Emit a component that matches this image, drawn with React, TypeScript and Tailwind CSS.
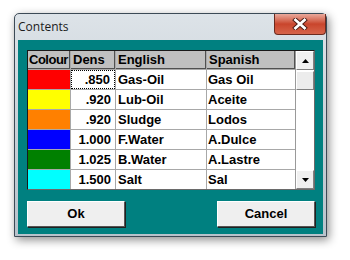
import React from "react";

const rows = [
  { colour: "bg-[#ff0000]", dens: ".850", en: "Gas-Oil", es: "Gas Oil" },
  { colour: "bg-[#ffff00]", dens: ".920", en: "Lub-Oil", es: "Aceite" },
  { colour: "bg-[#ff8000]", dens: ".920", en: "Sludge", es: "Lodos" },
  { colour: "bg-[#0000ff]", dens: "1.000", en: "F.Water", es: "A.Dulce" },
  { colour: "bg-[#008000]", dens: "1.025", en: "B.Water", es: "A.Lastre" },
  { colour: "bg-[#00ffff]", dens: "1.500", en: "Salt", es: "Sal" },
];

const headers = ["Colour", "Dens", "English", "Spanish"];

const ScrollButton = ({ up }: { up?: boolean }) => (
  <div className="flex h-[19px] items-center justify-center border border-t-white border-l-white border-b-[#808080] border-r-[#808080] bg-[#f0f0f0]">
    <svg width="7" height="4" viewBox="0 0 7 4">
      {up ? <path d="M3.5 0 L7 4 L0 4 Z" fill="#000" /> : <path d="M0 0 L7 0 L3.5 4 Z" fill="#000" />}
    </svg>
  </div>
);

export default function App() {
  return (
    <div className="h-[260px] w-[350px] bg-white pl-[14px] pt-[13px] font-['Liberation_Sans',Arial,sans-serif]">
      <div className="relative flex h-[224px] w-[313px] flex-col rounded-t-[5px] border border-[#3c4a56] bg-gradient-to-b from-[#dde3e8] via-[#c9d1d8] to-[#b8c2cb] shadow-[2px_3px_10px_rgba(0,0,0,0.45)]">
        {/* title bar */}
        <div className="flex h-[26px] items-center pl-[3px] font-['Open_Sans',sans-serif] text-[12px] text-[#1b1b1b]">
          Contents
        </div>
        <div className="absolute right-0 top-0 flex h-[21px] w-[52px] items-center justify-center rounded-b-[4px] border border-t-0 border-[#6b2a1e] bg-gradient-to-b from-[#e9a99c] via-[#c9452c] to-[#d6644a]">
          <svg width="16" height="12" viewBox="0 0 16 12">
            <path d="M3.5 2 L12.5 10 M12.5 2 L3.5 10" stroke="#4a1a12" strokeWidth="4.6" strokeLinecap="square" />
            <path d="M3.5 2 L12.5 10 M12.5 2 L3.5 10" stroke="#fff" strokeWidth="2.8" strokeLinecap="square" />
          </svg>
        </div>

        {/* client area */}
        <div className="mx-[3px] flex h-[194px] flex-col bg-[#008080] pl-[9px] pr-[8px] pt-[10px]">
          <div className="flex h-[140px] border border-t-[#1a1a1a] border-l-[#1a1a1a] border-b-[#6a6a6a] border-r-[#6a6a6a] bg-white">
            <div className="grid w-[268px] grid-cols-[42px_44px_90px_88px] grid-rows-[18px_repeat(6,19px)] gap-px border-r border-[#9a9a9a] bg-[#a8a8a8] text-[13px] font-bold leading-[19px] text-black">
              {headers.map((h, i) => (
                <div
                  key={h}
                  className={`overflow-hidden bg-[#c0c0c0] leading-[18px] shadow-[inset_-1px_-1px_0_#505050] ${i === 0 ? "pl-[1px] tracking-[-0.5px]" : "pl-[2px]"}`}
                >
                  {h}
                </div>
              ))}
              {rows.map((r, i) => (
                <React.Fragment key={r.en}>
                  <div className={r.colour} />
                  <div className="bg-white">
                    <div className={`h-full pr-[4px] text-right ${i === 0 ? "border border-dotted border-black leading-[17px] pr-[3px]" : ""}`}>
                      {r.dens}
                    </div>
                  </div>
                  <div className="bg-white pl-[2px]">{r.en}</div>
                  <div className="bg-white pl-[1px]">{r.es}</div>
                </React.Fragment>
              ))}
            </div>
            <div className="flex w-[18px] flex-col bg-white">
              <ScrollButton up />
              <div className="mt-px h-[19px] border border-t-white border-l-white border-b-[#808080] border-r-[#808080] bg-[#ececec]" />
              <div className="flex-1" />
              <ScrollButton />
            </div>
          </div>

          <div className="mt-[11px] flex justify-between text-[13px] font-bold text-black">
            <button className="h-[26px] w-[98px] border border-t-white border-l-white border-b-[#555] border-r-[#555] bg-[#efefef] shadow-[1px_1px_0_#202020]">
              Ok
            </button>
            <button className="h-[26px] w-[98px] border border-t-white border-l-white border-b-[#555] border-r-[#555] bg-[#efefef] shadow-[1px_1px_0_#202020]">
              Cancel
            </button>
          </div>
        </div>
      </div>
    </div>
  );
}
